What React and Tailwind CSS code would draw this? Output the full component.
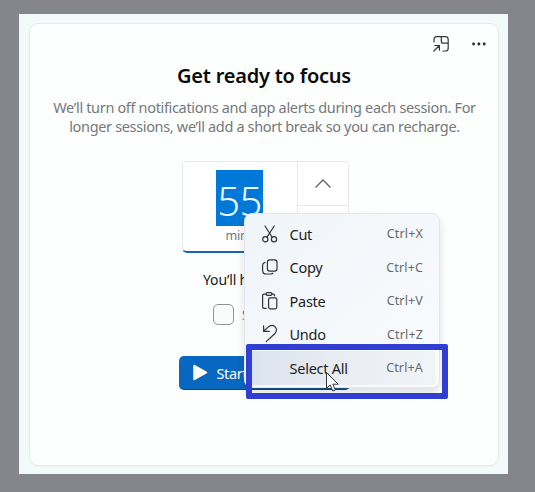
import React from "react";

function ScissorsIcon() {
  return (
    <svg width="18" height="20" viewBox="0 0 18 20" fill="none" stroke="#303236" strokeWidth="1.2" strokeLinecap="round">
      <path d="M4 2 L11.2 13.3 M13.2 2 L6 13.3" />
      <circle cx="4.3" cy="15.3" r="2.6" />
      <circle cx="13" cy="15.3" r="2.6" />
    </svg>
  );
}

function CopyIcon() {
  return (
    <svg width="18" height="20" viewBox="0 0 18 20" fill="none" stroke="#303236" strokeWidth="1.2" strokeLinecap="round">
      <rect x="6.4" y="2.9" width="9.6" height="11.2" rx="2.4" />
      <path d="M4 5.4 C2.4 5.9 1.6 6.6 1.6 8.2 V13.4 Q1.6 17 5.2 17 H9.2 Q11 17 11.9 16.2" />
    </svg>
  );
}

function PasteIcon() {
  return (
    <svg width="18" height="20" viewBox="0 0 18 20" fill="none" stroke="#303236" strokeWidth="1.2" strokeLinecap="round">
      <path d="M5 3.2 H3.2 Q1.6 3.2 1.6 4.8 V15.8 Q1.6 17.4 3.2 17.4 H5.2 M11 3.2 H12.2 Q13.6 3.2 13.6 4.8" />
      <rect x="5" y="1.6" width="6" height="2.8" rx="1.4" />
      <rect x="7.6" y="6.8" width="8.2" height="11" rx="1.5" />
    </svg>
  );
}

function UndoIcon() {
  return (
    <svg width="18" height="20" viewBox="0 0 18 20" fill="none" stroke="#303236" strokeWidth="1.2" strokeLinecap="round" strokeLinejoin="round">
      <path d="M2.6 1.8 V7.3 H8.3 M2.8 7 L6.8 3.4 C9.4 1.1 12.2 1 14 2.7 C16 4.7 15.8 7.8 13.7 9.8 L5.2 17.6" />
    </svg>
  );
}

const items = [
  { label: "Cut", keys: "Ctrl+X", Icon: ScissorsIcon },
  { label: "Copy", keys: "Ctrl+C", Icon: CopyIcon },
  { label: "Paste", keys: "Ctrl+V", Icon: PasteIcon },
  { label: "Undo", keys: "Ctrl+Z", Icon: UndoIcon },
  { label: "Select All", keys: "Ctrl+A", active: true },
];

function ContextMenu() {
  return (
    <div className="absolute left-[244px] top-[213px] h-[175px] w-[196px] rounded-lg border border-[#e3e6ea] bg-gradient-to-br from-[#f0f5fa] via-[#f5f8fb] to-[#f9fbfc] px-[3px] pt-[3px] shadow-[0_5px_10px_rgba(0,0,0,0.12)]">
      {items.map(({ label, keys, Icon, active }) => (
        <div
          key={label}
          className={
            "flex h-[33.5px] items-center rounded-[4px] pl-[13px] pr-[13px] " +
            (active ? "bg-gradient-to-r from-[#dae3ed] via-[#e9edf3] to-[#f1f4f6]" : "")
          }
        >
          <span className="flex w-[28.5px] shrink-0">{Icon ? <Icon /> : null}</span>
          <span className="whitespace-nowrap text-[14.5px] leading-5 tracking-[-0.25px] text-[#1d1f23]">{label}</span>
          <span className="ml-auto pt-px text-[12.5px] leading-5 tracking-[0.15px] text-[#666a6e]">{keys}</span>
        </div>
      ))}
    </div>
  );
}

function DurationPicker() {
  return (
    <div className="flex h-[92px] w-[167px] overflow-hidden rounded-[5px] border border-b-2 border-[#e7e9eb] border-b-[#1465b5] bg-white">
      <div className="flex w-[115px] flex-col items-center border-r border-[#e7e9eb] pt-2">
        <div className="flex h-[56px] w-[47px] items-center justify-center bg-[#0078d7] pt-[6px] text-[40px] font-light leading-none tracking-[-0.5px] text-[#edf7ff]">
          55
        </div>
        <div className="pt-px text-[12.5px] leading-[18px] tracking-[-0.2px] text-[#727578]">mins</div>
      </div>
      <div className="flex flex-1 flex-col">
        <div className="flex h-[44px] items-center justify-center border-b border-[#e7e9eb]">
          <svg width="18" height="10" viewBox="0 0 18 10" fill="none" stroke="#606367" strokeWidth="1.3">
            <path d="M1.5 8.5 L9 1 L16.5 8.5" />
          </svg>
        </div>
        <div className="flex flex-1 items-center justify-center">
          <svg width="18" height="10" viewBox="0 0 18 10" fill="none" stroke="#606367" strokeWidth="1.3">
            <path d="M1.5 1.5 L9 9 L16.5 1.5" />
          </svg>
        </div>
      </div>
    </div>
  );
}

export default function App() {
  return (
    <div className="relative h-[492px] w-[535px] overflow-hidden bg-[#85868b] pl-[19px] pt-[14px] font-['Noto_Sans','Open_Sans',sans-serif]">
      <div className="h-[460px] w-[489px] bg-[#f3fafa] pl-[10px] pt-[9px]">
        <div className="flex h-[443px] w-[470px] flex-col items-center rounded-[9px] border border-[#e5eaeb] bg-[#fdfefe] shadow-[0_1px_2px_rgba(0,0,0,0.03)]">
          <div className="flex h-[40px] w-full items-center justify-end gap-[20px] pr-[11px]">
            <svg width="18" height="18" viewBox="0 0 18 18" fill="none" stroke="#35373a" strokeWidth="1.2" strokeLinecap="round" strokeLinejoin="round">
              <path d="M2 7 V4.5 Q2 1.7 4.8 1.7 H13.4 Q16.2 1.7 16.2 4.5 V13.2 Q16.2 16 13.4 16 H11 M9.3 1.7 V6.2 Q9.3 8.2 11.3 8.2 H16.2 M1.8 16 L7.4 10.5 M2.8 10.5 H7.4 V15.2" />
            </svg>
            <svg width="17" height="18" viewBox="0 0 17 18" fill="#26282b">
              <circle cx="3.6" cy="9" r="1.45" />
              <circle cx="8.9" cy="9" r="1.45" />
              <circle cx="14.2" cy="9" r="1.45" />
            </svg>
          </div>
          <h1 className="mt-[-2px] whitespace-nowrap text-[20px] font-semibold leading-[28px] tracking-[-0.22px] text-[#090a0b]">
            Get ready to focus
          </h1>
          <div className="mt-[8px] h-[39px] pl-px text-center text-[14.5px] leading-[19px] text-[#75797a]">
            <p className="whitespace-nowrap tracking-[-0.34px]">We’ll turn off notifications and app alerts during each session. For</p>
            <p className="whitespace-nowrap tracking-[-0.34px]">longer sessions, we’ll add a short break so you can recharge.</p>
          </div>
          <div className="mt-[24px] pl-[2px]">
            <DurationPicker />
          </div>
          <div className="mt-[17px] pl-[2px]">
            <p className="w-[124px] whitespace-nowrap text-[14px] leading-[20px] tracking-[-0.15px] text-[#17191b]">
              You’ll have 1 break
            </p>
          </div>
          <div className="mt-[14px] flex w-[102px] items-center gap-[8px]">
            <span className="h-[21px] w-[21px] shrink-0 rounded-[5px] border border-[#929597] bg-[#fafbfb]" />
            <span className="whitespace-nowrap text-[14px] leading-[20px] tracking-[-0.3px] text-[#75797a]">Skip breaks</span>
          </div>
          <button className="mt-[31px] flex h-[34px] w-[171px] items-center rounded-[5px] border-b border-[#084b8b] bg-[#0867c0] pl-[14px] text-white">
            <svg width="15" height="17" viewBox="0 0 15 17" fill="#ffffff" stroke="#ffffff" strokeWidth="1.5" strokeLinejoin="round">
              <path d="M1 1.5 L13.5 8.5 L1 15.5 Z" />
            </svg>
            <span className="ml-[9px] whitespace-nowrap text-[14.5px] leading-5 tracking-[-0.35px]">Start focus session</span>
          </button>
        </div>
      </div>

      <ContextMenu />
      <div className="absolute left-[252px] top-[388px] h-px w-[95px] bg-[#164e7d]" />
      <div className="absolute left-[246px] top-[344px] h-[55px] w-[202px] rounded-[2px] border-[6px] border-[#303ed1]" />
      <svg className="absolute left-[325px] top-[371px]" width="16" height="22" viewBox="0 0 16 22" fill="#fefefe" stroke="#33363b" strokeWidth="1" strokeLinejoin="round">
        <path d="M1.5 1.5 V17.3 L5.2 14 L7.8 20 L10.3 19 L7.8 13.2 H13.2 Z" />
      </svg>
    </div>
  );
}
